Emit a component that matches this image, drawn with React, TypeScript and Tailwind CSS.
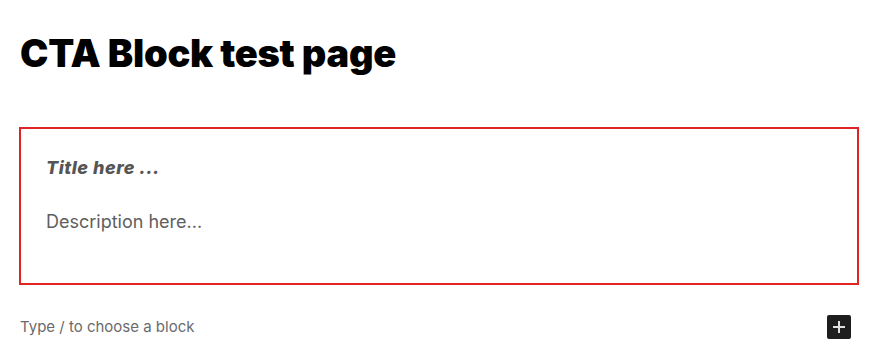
import React from "react";

export default function App() {
  return (
    <div className="w-[882px] h-[362px] bg-white overflow-hidden" style={{ fontFamily: "Inter, 'Noto Sans', sans-serif" }}>
      <div className="pl-[19px] pr-[23px] pt-[30px]">
        <h1 className="pl-[1px] text-[38px] leading-[46px] font-black text-black tracking-[-0.25px]">CTA Block test page</h1>
        <div className="mt-[51px] border-2 border-[#e02424] h-[158px] pl-[25px] pt-[26px]">
          <div className="text-[18px] leading-[26px] font-extrabold italic text-[#555555] tracking-[0.5px]">Title here ...</div>
          <div className="mt-[28px] text-[18px] leading-[26px] text-[#5e5e5e]">Description here...</div>
        </div>
        <div className="mt-[30px] pl-[1px] flex items-center justify-between">
          <span className="text-[15px] text-[#6b6b6b]">Type / to choose a block</span>
          <button className="w-[24px] h-[24px] bg-[#1e1e1e] rounded-[2px] flex items-center justify-center mr-[8px]">
            <svg width="14" height="14" viewBox="0 0 14 14">
              <path d="M7 1v12M1 7h12" stroke="#e0e0e0" strokeWidth="2" />
            </svg>
          </button>
        </div>
      </div>
    </div>
  );
}
